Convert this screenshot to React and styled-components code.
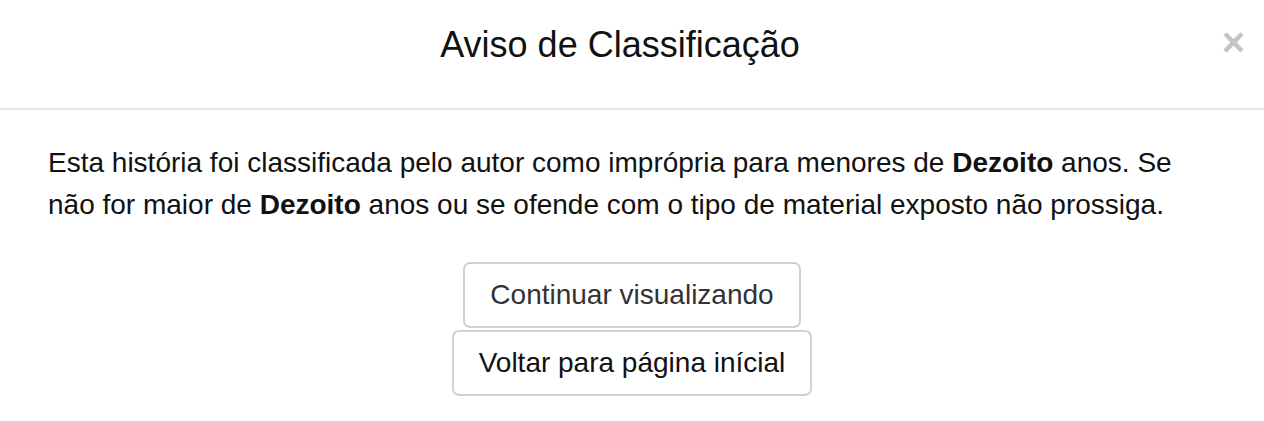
import React from "react";
import styled, { createGlobalStyle } from "styled-components";

const GlobalStyle = createGlobalStyle`
  html, body {
    margin: 0;
    padding: 0;
    background: #fff;
  }
  body {
    font-family: "Liberation Sans", Arial, sans-serif;
    color: #111;
  }
`;

const Modal = styled.div`
  width: 1264px;
  height: 421px;
  background: #fff;
  overflow: hidden;
`;

const Header = styled.div`
  position: relative;
  height: 108px;
  padding-right: 24px;
  border-bottom: 2px solid #e5e5e5;
  display: flex;
  align-items: center;
  justify-content: center;
`;

const Title = styled.h4`
  margin: 0;
  font-size: 36px;
  font-weight: 400;
  color: #111;
  padding-bottom: 18px;
`;

const Close = styled.button`
  position: absolute;
  top: 22px;
  right: 19px;
  border: none;
  background: none;
  padding: 0;
  color: #c4c4c4;
  font-family: "Liberation Sans", Arial, sans-serif;
  font-size: 40px;
  font-weight: 700;
  line-height: 1;
  cursor: pointer;
`;

const Body = styled.div`
  padding: 32px 48px 0;
`;

const Message = styled.p`
  margin: 0;
  font-size: 28px;
  line-height: 42px;
  color: #111;
`;

const Actions = styled.div`
  display: flex;
  flex-direction: column;
  align-items: center;
  gap: 2px;
  margin-top: 36px;
`;

const Button = styled.button`
  font-family: "Liberation Sans", Arial, sans-serif;
  font-size: 28px;
  line-height: 32px;
  padding: 15px 25px;
  background: #fff;
  color: ${(p) => (p.$muted ? "#333" : "#111")};
  border: 2px solid #d0d0d0;
  border-radius: 7px;
  cursor: pointer;
`;

export default function App() {
  return (
    <Modal>
      <GlobalStyle />
      <Header>
        <Title>Aviso de Classificação</Title>
        <Close aria-label="Fechar">×</Close>
      </Header>
      <Body>
        <Message>
          Esta história foi classificada pelo autor como imprópria para menores
          de <strong>Dezoito</strong> anos. Se
          <br />
          não for maior de <strong>Dezoito</strong> anos ou se ofende com o
          tipo de material exposto não prossiga.
        </Message>
        <Actions>
          <Button $muted>Continuar visualizando</Button>
          <Button>Voltar para página inícial</Button>
        </Actions>
      </Body>
    </Modal>
  );
}
